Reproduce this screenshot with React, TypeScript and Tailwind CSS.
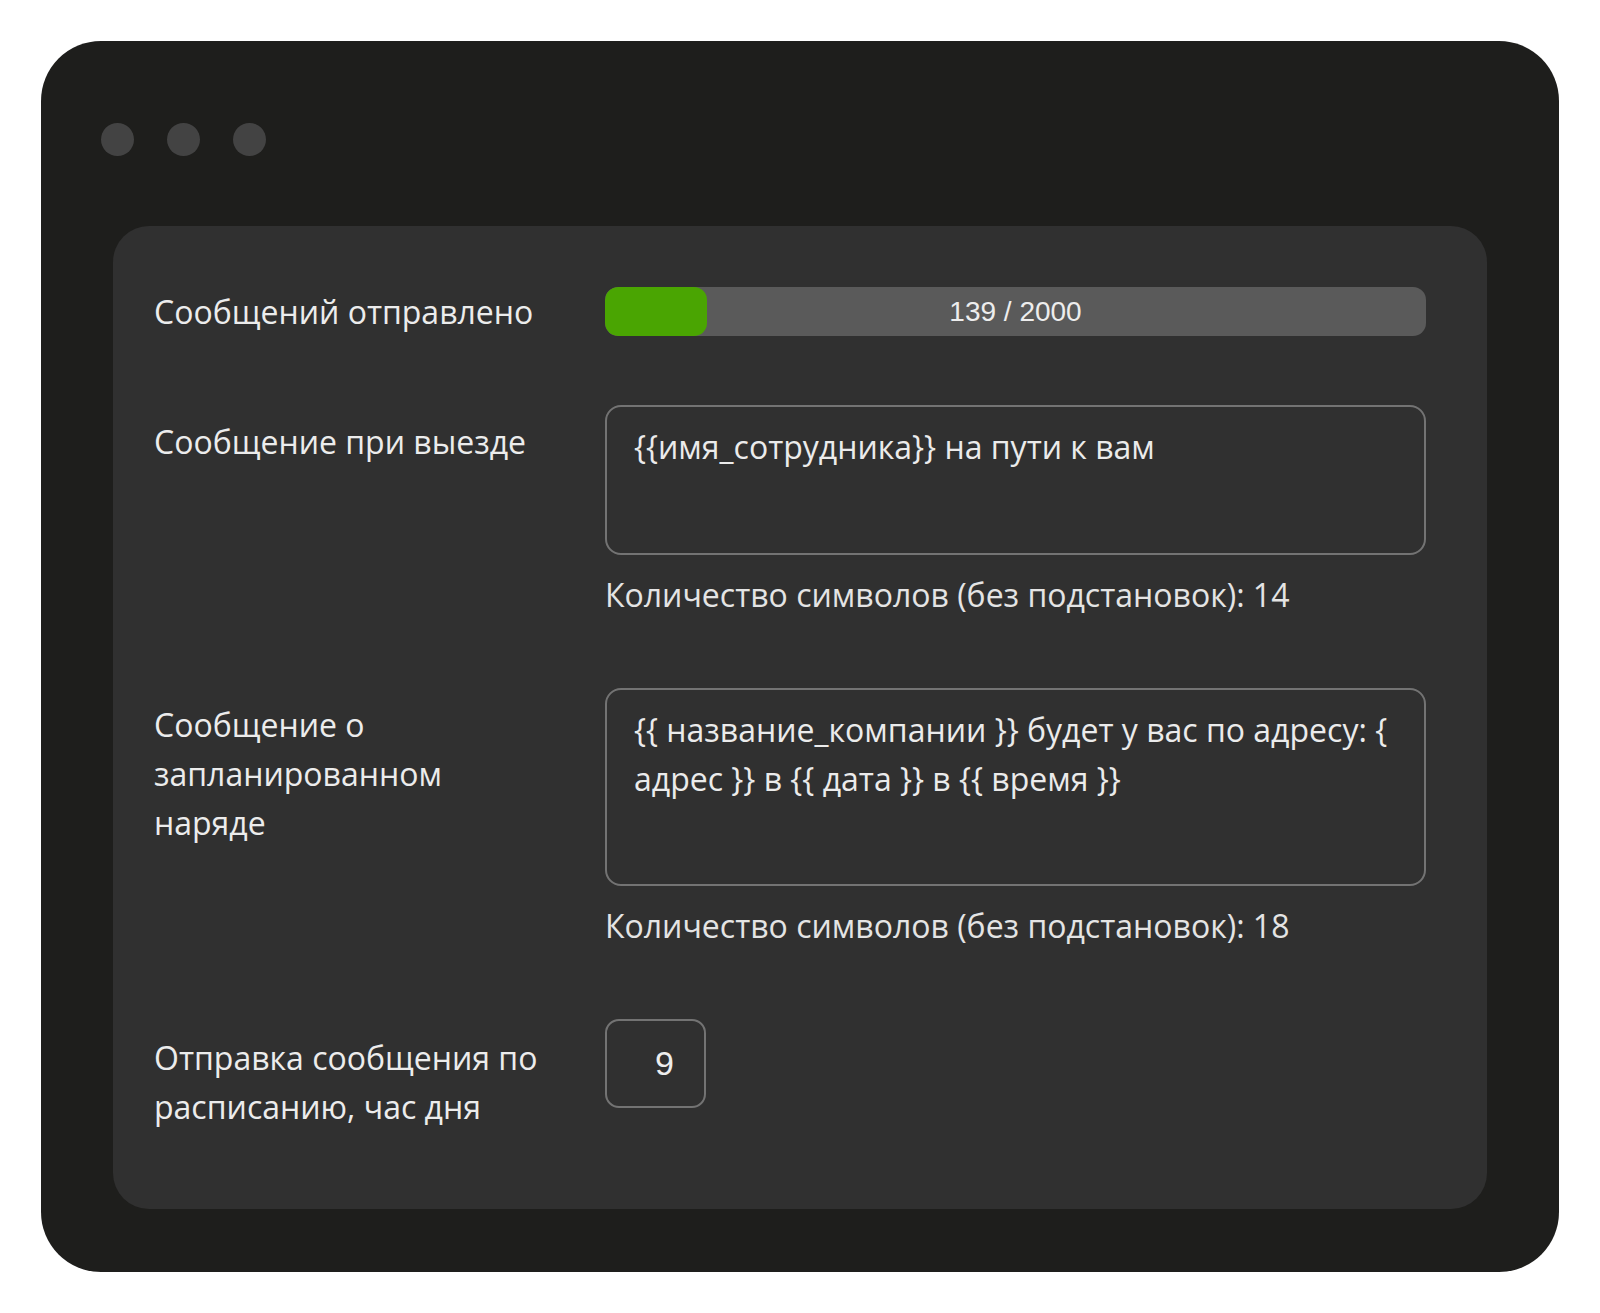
import React from "react";

const sent = 139;
const limit = 2000;

function Label({ children, className = "" }: { children: React.ReactNode; className?: string }) {
    return (
        <div className={`w-[451px] shrink-0 pr-6 text-[32px] leading-[49px] text-[#ececec] ${className}`}>
            {children}
        </div>
    );
}

function Counter({ value }: { value: number }) {
    return (
        <div className="mt-[15px] text-[32px] leading-[49px] text-[#e4e4e4]">
            Количество символов (без подстановок): {value}
        </div>
    );
}

function MessageBox({ lines, height }: { lines: string[]; height: string }) {
    return (
        <div className={`${height} rounded-[16px] border-2 border-[#737373] pl-[27px] pr-6 pt-[15px] text-[32px] leading-[49px] text-[#ebebeb]`}>
            {lines.map((line) => (
                <div key={line} className="whitespace-nowrap">{line}</div>
            ))}
        </div>
    );
}

export default function App() {
    const fill = Math.max((sent / limit) * 100, 12.4);

    return (
        <div className="min-h-screen bg-white p-[41px] font-['Open_Sans','Noto_Sans',sans-serif] font-medium">
            <div className="h-[1231px] rounded-[60px] bg-[#1e1e1c] px-[72px] pt-[82px]">
                {/* window controls */}
                <div className="-ml-3 flex gap-[33px]">
                    <span className="size-[33px] rounded-full bg-[#434343]" />
                    <span className="size-[33px] rounded-full bg-[#434343]" />
                    <span className="size-[33px] rounded-full bg-[#434343]" />
                </div>

                <div className="mt-[70px] flex flex-col gap-[69px] rounded-[36px] bg-[#303030] pb-[78px] pl-[41px] pr-[61px] pt-[61px]">
                    <div className="flex items-center">
                        <Label>Сообщений отправлено</Label>
                        <div className="relative h-[49px] flex-1 overflow-hidden rounded-[13px] bg-[#5a5a5a]">
                            <div
                                className="absolute inset-y-0 left-0 rounded-[13px] bg-[#4aa502]"
                                style={{ width: `${fill}%` }}
                            />
                            <div className="relative flex h-full items-center justify-center font-['Liberation_Sans',Arial,sans-serif] text-[28px] font-normal text-[#ededed]">
                                {sent} / {limit}
                            </div>
                        </div>
                    </div>

                    <div className="flex items-start">
                        <Label className="pt-[12px]">Сообщение при выезде</Label>
                        <div className="flex-1">
                            <MessageBox height="h-[150px]" lines={["{{имя_сотрудника}} на пути к вам"]} />
                            <Counter value={14} />
                        </div>
                    </div>

                    <div className="flex items-start">
                        <Label className="pt-[12px]">
                            Сообщение о
                            <br />
                            запланированном
                            <br />
                            наряде
                        </Label>
                        <div className="flex-1">
                            <MessageBox
                                height="h-[198px]"
                                lines={[
                                    "{{ название_компании }} будет у вас по адресу: {",
                                    "адрес }} в {{ дата }} в {{ время }}",
                                ]}
                            />
                            <Counter value={18} />
                        </div>
                    </div>

                    <div className="flex items-start">
                        <Label className="pt-[14px]">
                            Отправка сообщения по
                            <br />
                            расписанию, час дня
                        </Label>
                        <div className="flex h-[89px] w-[101px] items-center rounded-[14px] border-2 border-[#737373] pl-[48px] font-['Liberation_Sans',Arial,sans-serif] text-[34px] font-normal text-[#ededed]">
                            9
                        </div>
                    </div>
                </div>
            </div>
        </div>
    );
}
